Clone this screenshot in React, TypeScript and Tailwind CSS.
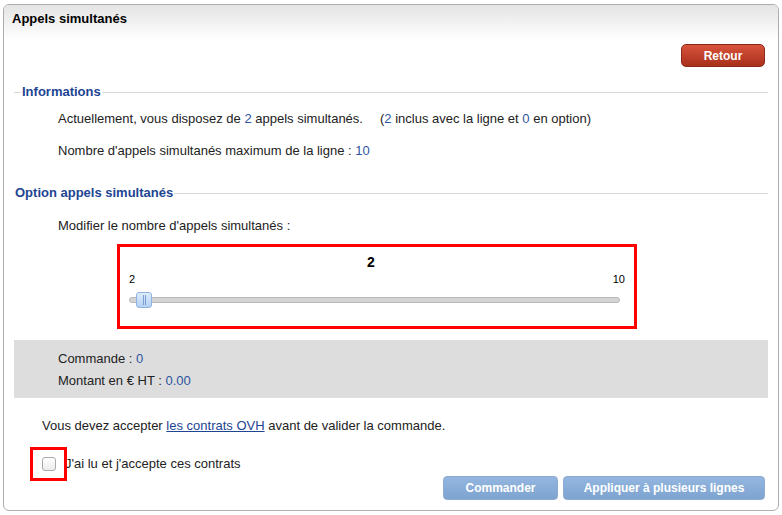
import React from 'react';

const font = { fontFamily: '"Liberation Sans", Arial, sans-serif' };

function Legend({ title, lead }: { title: string; lead?: boolean }) {
  return (
    <div className="flex items-center h-4">
      {lead && <div className="w-[7px] h-px bg-[#d8d8d8] mr-px" />}
      <span className="text-[13px] font-bold text-[#1d4592] leading-4 pr-px">{title}</span>
      <div className="flex-1 h-px bg-[#d8d8d8]" />
    </div>
  );
}

function Num({ children }: { children: React.ReactNode }) {
  return <span className="text-[#2c54a0]">{children}</span>;
}

export default function App() {
  return (
    <div className="w-[782px] h-[515px] bg-white pt-1 px-[3px]" style={font}>
      <div className="relative h-[507px] rounded-md border border-[#adadad] bg-white flex flex-col overflow-hidden">
        {/* header */}
        <div className="h-[35px] bg-gradient-to-b from-[#e4e4e4] to-white px-2 pt-[6px]">
          <h1 className="text-[13px] font-bold text-black leading-4">Appels simultanés</h1>
        </div>

        <div className="flex justify-end pr-[13px] mt-1">
          <button className="w-[84px] h-[23px] rounded-[5px] border border-[#8a2a1a] bg-gradient-to-b from-[#d9533c] to-[#a8301c] text-white text-[12px] font-bold leading-none">
            Retour
          </button>
        </div>

        <div className="px-[10px] mt-[17px]">
          <Legend title="Informations" lead />
          <div className="text-[13px] text-[#222] leading-4">
            <p className="mt-[11px] pl-[44px] flex">
              <span>
                Actuellement, vous disposez de <Num>2</Num> appels simultanés.
              </span>
              <span className="ml-[17px]">
                (<Num>2</Num> inclus avec la ligne et <Num>0</Num> en option)
              </span>
            </p>
            <p className="mt-4 pl-[44px]">
              Nombre d'appels simultanés maximum de la ligne : <Num>10</Num>
            </p>
          </div>

          <div className="mt-[26px] ml-px">
            <Legend title="Option appels simultanés" />
          </div>
          <p className="mt-[17px] pl-[44px] text-[13px] text-[#222] leading-4">
            Modifier le nombre d'appels simultanés :
          </p>

          {/* slider box */}
          <div className="ml-[103px] mt-[10px] w-[520px] h-[85px] border-[3px] border-[#ff0000] px-[9px] pt-[7px]">
            <div className="text-center text-[14px] font-bold text-black leading-4 pr-[12px]">2</div>
            <div className="flex justify-between text-[11px] text-black leading-[14px] mt-[2px]">
              <span>2</span>
              <span>10</span>
            </div>
            <div className="relative mt-[6px] mr-[5px] h-[16px] flex items-center">
              <div className="w-full h-[6px] rounded-full bg-[#d4d4d4] border border-[#b9b9b9]" />
              <div className="absolute left-[7px] top-0 w-[16px] h-[16px] rounded-[3px] border border-[#8fb2e0] bg-gradient-to-b from-[#dcebfc] to-[#b6d1f3] flex justify-center items-center">
                <div className="w-[3px] h-[10px] border-x border-[#7c9fcf]" />
              </div>
            </div>
          </div>

          {/* totals */}
          <div className="mt-[11px] h-[58px] bg-[#dddddd] pl-[44px] pt-[11px] text-[13px] text-[#222] leading-4">
            <p>
              Commande : <Num>0</Num>
            </p>
            <p className="mt-[6px]">
              Montant en € HT : <Num>0.00</Num>
            </p>
          </div>

          <p className="mt-[20px] pl-[28px] text-[13px] text-[#222] leading-4">
            Vous devez accepter{' '}
            <a href="#" className="text-[#1d4592] underline">
              les contrats OVH
            </a>{' '}
            avant de valider la commande.
          </p>

          <div className="mt-[22px] pl-[28px] flex items-center h-4 text-[13px] text-[#222]">
            <span className="relative w-[14px] h-[14px] rounded-[3px] border border-[#a9a9a9] bg-gradient-to-b from-white to-[#ececec]">
              <span className="absolute -left-[13px] -top-[11px] w-[37px] h-[34px] border-[3px] border-[#ff0000]" />
            </span>
            <span className="ml-[9px] leading-4">J'ai lu et j'accepte ces contrats</span>
          </div>

          <div className="mt-[4px] flex justify-end gap-[5px] pr-[3px]">
            <button className="w-[115px] h-[24px] rounded-[4px] border border-[#8daad0] bg-gradient-to-b from-[#93b7e0] to-[#7ea3d0] text-white text-[12px] font-bold">
              Commander
            </button>
            <button className="w-[202px] h-[24px] rounded-[4px] border border-[#8daad0] bg-gradient-to-b from-[#93b7e0] to-[#7ea3d0] text-white text-[12px] font-bold">
              Appliquer à plusieurs lignes
            </button>
          </div>
        </div>
      </div>
    </div>
  );
}
